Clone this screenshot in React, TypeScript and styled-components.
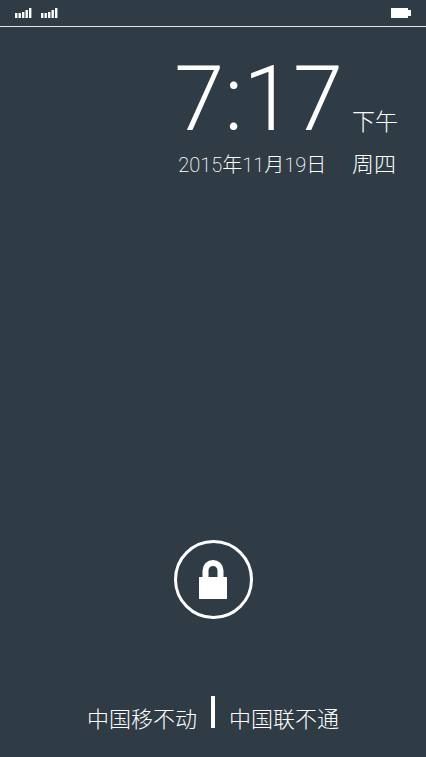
import React from "react";
import styled, { createGlobalStyle } from "styled-components";

const Global = createGlobalStyle`
  * { box-sizing: border-box; }
  body { margin: 0; background: #2f3b45; }
`;

const Screen = styled.div`
  min-height: 100vh;
  display: flex;
  flex-direction: column;
  background: #2f3b45;
  color: #fff;
  font-family: Roboto, "Noto Sans CJK SC", sans-serif;
  font-weight: 300;
`;

const StatusBar = styled.header`
  display: flex;
  align-items: center;
  justify-content: space-between;
  height: 27px;
  padding: 0 15px;
  border-bottom: 1px solid #e4e8ea;
`;

const Signals = styled.div`
  display: flex;
  gap: 9px;
`;

const Icon = styled.svg`
  display: block;
`;

const Clock = styled.section`
  display: grid;
  grid-template-columns: auto auto;
  justify-content: end;
  align-items: baseline;
  column-gap: 9px;
  padding: 28px 28px 0 0;
`;

const Time = styled.time`
  font-size: 90px;
  line-height: 90px;
`;

const DateText = styled.time`
  padding-left: 4px;
  font-size: 20px;
  font-weight: 200;
  line-height: 34px;
`;

const Side = styled.span<{ $size: number }>`
  font-family: "Noto Sans CJK SC", sans-serif;
  font-size: ${(p) => p.$size}px;
  line-height: 34px;
`;

const Main = styled.main`
  flex: 1;
  display: flex;
  flex-direction: column;
  align-items: center;
  justify-content: flex-end;
  padding-bottom: 77px;
`;

const UnlockButton = styled.button`
  display: flex;
  align-items: center;
  justify-content: center;
  width: 79px;
  height: 79px;
  padding: 0;
  border: 3px solid #fff;
  border-radius: 50%;
  background: none;
  color: #fff;
  cursor: pointer;
`;

const Carriers = styled.footer`
  display: grid;
  grid-template-columns: 1fr 4px 1fr;
  column-gap: 14px;
  height: 61px;
  font-family: "Noto Sans CJK SC", sans-serif;
  font-size: 22px;
  line-height: 42px;
`;

const Carrier = styled.span<{ $align: "left" | "right" }>`
  text-align: ${(p) => p.$align};
`;

const Divider = styled.span`
  height: 32px;
  background: #fff;
`;

const BARS = [5, 5, 6, 8, 10];

function SignalIcon() {
  return (
    <Icon width="17" height="10" viewBox="0 0 17 10" fill="#fff" aria-hidden="true">
      {BARS.map((h, i) => (
        <rect key={i} x={i * 3.5} y={10 - h} width="2.4" height={h} />
      ))}
    </Icon>
  );
}

export default function App() {
  return (
    <Screen>
      <Global />
      <StatusBar>
        <Signals>
          <SignalIcon />
          <SignalIcon />
        </Signals>
        <Icon width="20" height="10" viewBox="0 0 20 10" fill="#fff" aria-hidden="true">
          <path d="M0 0h17v2h3v6h-3v2H0z" />
        </Icon>
      </StatusBar>
      <Clock>
        <Time>7:17</Time>
        <Side $size={23}>下午</Side>
        <DateText>2015年11月19日</DateText>
        <Side $size={22}>周四</Side>
      </Clock>
      <Main>
        <UnlockButton aria-label="解锁">
          <Icon width="28" height="39" viewBox="0 0 28 39" aria-hidden="true">
            <rect y="17" width="28" height="22" fill="#fff" />
            <path d="M6.500 18V10.500a7.500 7.500 0 0 1 15 0V18" fill="none" stroke="#fff" strokeWidth="6" />
          </Icon>
        </UnlockButton>
      </Main>
      <Carriers>
        <Carrier $align="right">中国移不动</Carrier>
        <Divider />
        <Carrier $align="left">中国联不通</Carrier>
      </Carriers>
    </Screen>
  );
}
